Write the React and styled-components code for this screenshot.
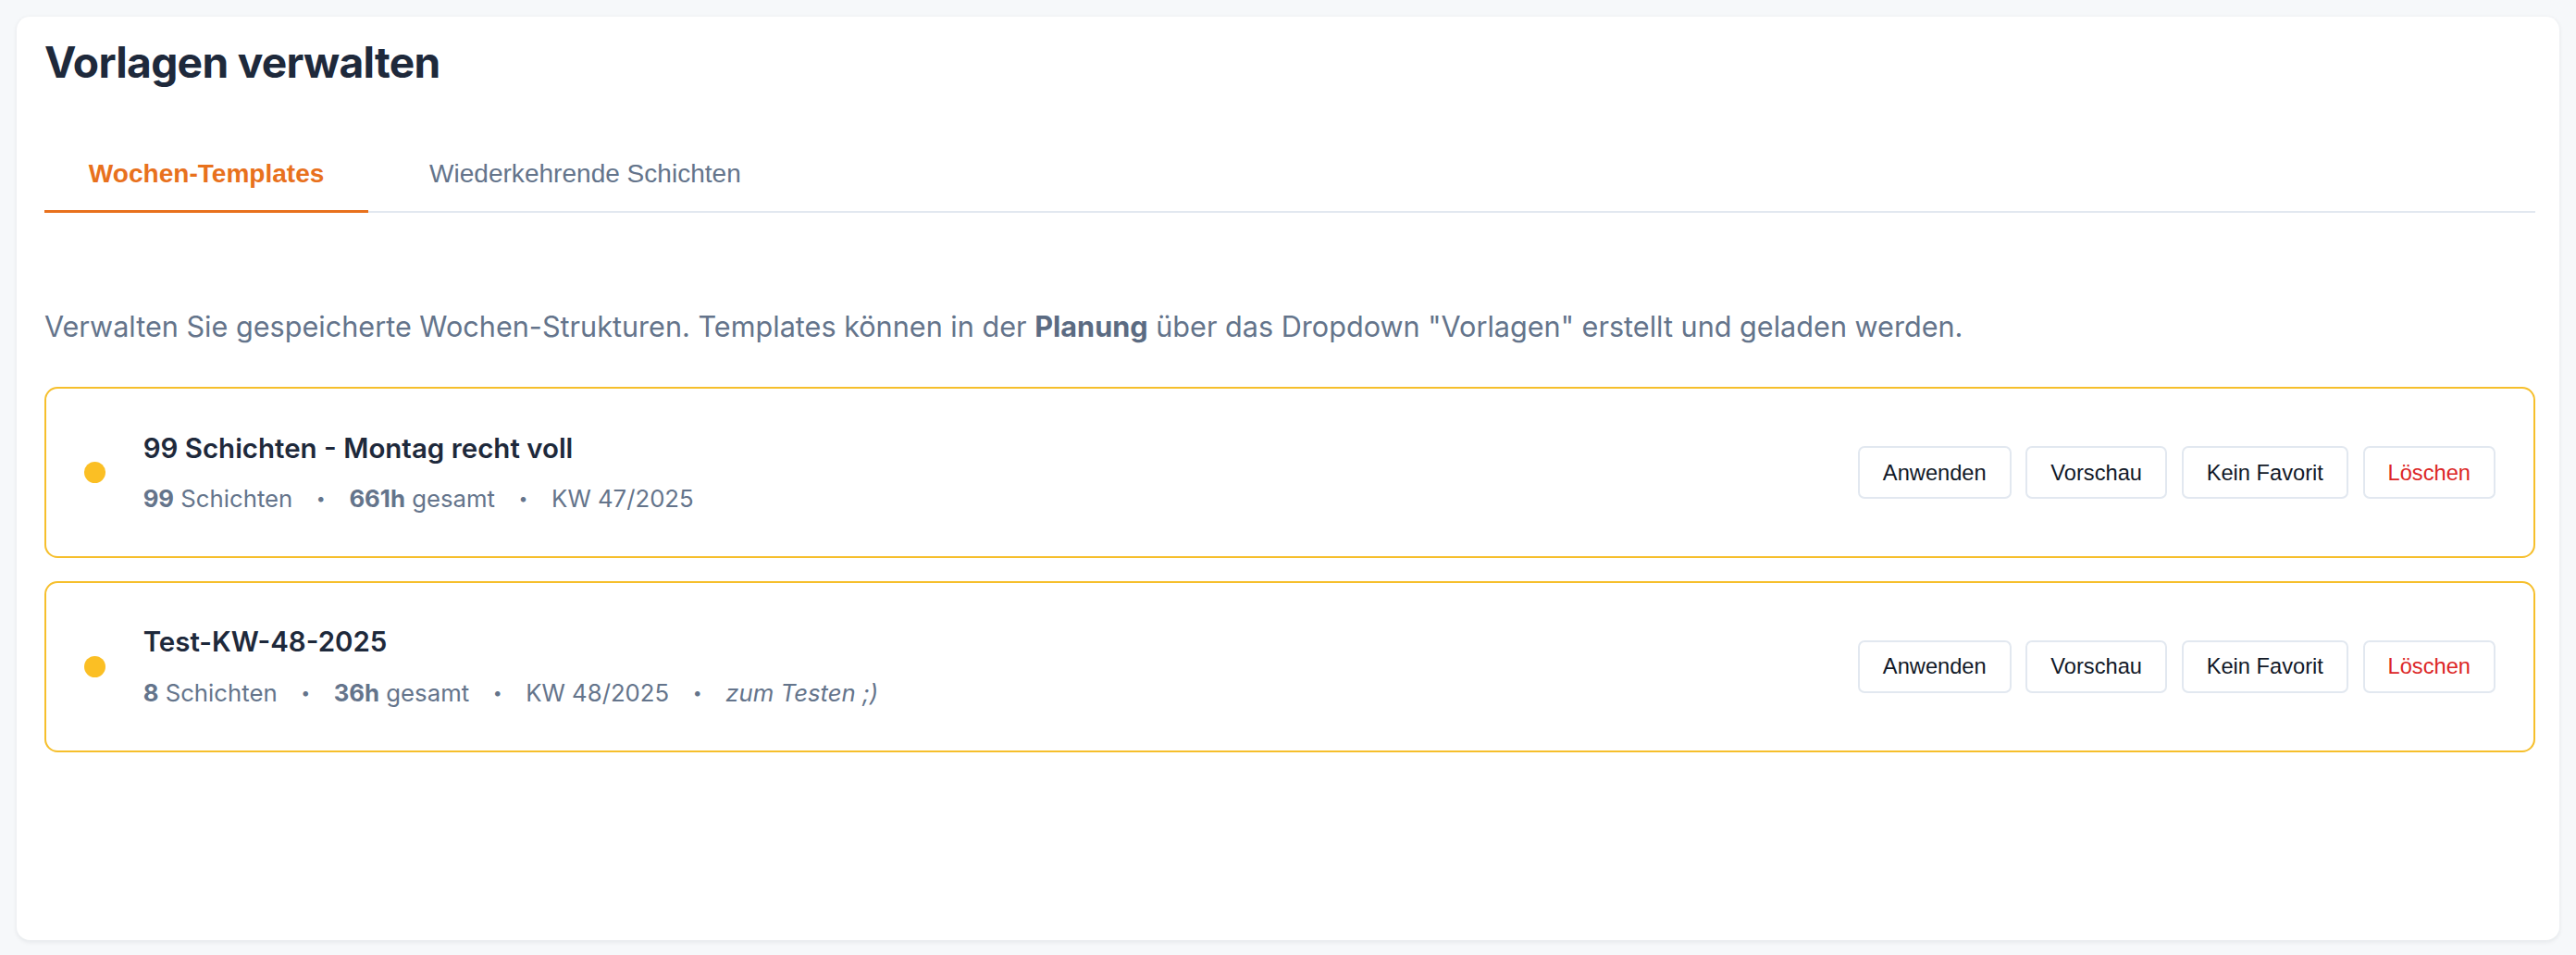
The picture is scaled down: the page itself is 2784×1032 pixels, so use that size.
import React, { useState } from 'react';
import styled, { createGlobalStyle } from 'styled-components';

const GlobalStyle = createGlobalStyle`
  html, body {
    margin: 0;
    padding: 0;
    background: #f6f8fa;
  }
  #root {
    zoom: 1.7755;
  }
`;

const Page = styled.div`
  box-sizing: border-box;
  height: 581px;
  padding: 10px 10px 9px 10px;
  font-family: Inter, "Noto Sans", sans-serif;
`;

const Card = styled.div`
  box-sizing: border-box;
  height: 100%;
  background: #ffffff;
  border-radius: 8px;
  box-shadow: 0 1px 3px rgba(15, 23, 42, 0.08);
  padding: 11px 15px 0 17px;
`;

const Title = styled.h1`
  margin: 0;
  font-size: 26px;
  line-height: 34px;
  font-weight: 700;
  letter-spacing: -0.4px;
  color: #1e293b;
`;

const TabBar = styled.div`
  display: flex;
  gap: 10px;
  margin-top: 32px;
  border-bottom: 1.15px solid #e2e8f0;
`;

const Tab = styled.button`
  font-family: "Liberation Sans", Arial, sans-serif;
  font-size: 15.8px;
  font-weight: ${p => (p.$active ? 700 : 400)};
  color: ${p => (p.$active ? '#e8711d' : '#64748b')};
  background: none;
  border: none;
  border-bottom: 2px solid ${p => (p.$active ? '#e8711d' : 'transparent')};
  margin-bottom: -1.15px;
  padding: 10px 27px 13px;
  cursor: pointer;
`;

const Intro = styled.p`
  margin: 56px 0 24px;
  font-size: 17.25px;
  line-height: 26px;
  color: #64748b;

  strong {
    font-weight: 700;
    color: #5b6b82;
  }
`;

const List = styled.div`
  display: flex;
  flex-direction: column;
  gap: 14px;
`;

const Item = styled.div`
  display: flex;
  align-items: center;
  height: 104px;
  box-sizing: border-box;
  border: 1.15px solid #f6bf2c;
  border-radius: 8px;
  padding: 0 23px;
`;

const Dot = styled.span`
  flex: none;
  width: 13px;
  height: 13px;
  border-radius: 50%;
  background: #fbbf24;
  margin-right: 23px;
`;

const Info = styled.div`
  flex: 1;
  display: flex;
  flex-direction: column;
  gap: 10px;
`;

const Name = styled.div`
  font-size: 16.6px;
  line-height: 22px;
  font-weight: 600;
  color: #1e293b;
`;

const Meta = styled.div`
  display: flex;
  align-items: center;
  gap: 14.4px;
  font-size: 14.5px;
  line-height: 20px;
  color: #64748b;

  b {
    font-weight: 700;
  }
`;

const Sep = styled.span`
  font-size: 10px;
`;

const Note = styled.span`
  font-style: italic;
`;

const Actions = styled.div`
  display: flex;
  gap: 9px;
`;

const ActionButton = styled.button`
  font-family: "Liberation Sans", Arial, sans-serif;
  font-size: 13.333px;
  line-height: 16px;
  padding: 7px 14px;
  background: #ffffff;
  border: 1.15px solid #e2e8f0;
  border-radius: 4px;
  color: ${p => (p.$danger ? '#dc2626' : '#111827')};
  cursor: pointer;
`;

const templates = [
  {
    name: '99 Schichten - Montag recht voll',
    shifts: 99,
    hours: '661h',
    week: 'KW 47/2025',
  },
  {
    name: 'Test-KW-48-2025',
    shifts: 8,
    hours: '36h',
    week: 'KW 48/2025',
    note: 'zum Testen ;)',
  },
];

const TemplateRow = ({ item }) => (
  <Item>
    <Dot />
    <Info>
      <Name>{item.name}</Name>
      <Meta>
        <span><b>{item.shifts}</b> Schichten</span>
        <Sep>•</Sep>
        <span><b>{item.hours}</b> gesamt</span>
        <Sep>•</Sep>
        <span>{item.week}</span>
        {item.note && (
          <>
            <Sep>•</Sep>
            <Note>{item.note}</Note>
          </>
        )}
      </Meta>
    </Info>
    <Actions>
      <ActionButton>Anwenden</ActionButton>
      <ActionButton>Vorschau</ActionButton>
      <ActionButton>Kein Favorit</ActionButton>
      <ActionButton $danger>Löschen</ActionButton>
    </Actions>
  </Item>
);

export default function App() {
  const [tab, setTab] = useState('weeks');

  return (
    <>
      <GlobalStyle />
      <Page>
        <Card>
          <Title>Vorlagen verwalten</Title>
          <TabBar>
            <Tab $active={tab === 'weeks'} onClick={() => setTab('weeks')}>
              Wochen-Templates
            </Tab>
            <Tab $active={tab === 'recurring'} onClick={() => setTab('recurring')}>
              Wiederkehrende Schichten
            </Tab>
          </TabBar>
          <Intro>
            Verwalten Sie gespeicherte Wochen-Strukturen. Templates können in der{' '}
            <strong>Planung</strong> über das Dropdown "Vorlagen" erstellt und geladen werden.
          </Intro>
          <List>
            {templates.map((t, i) => (
              <TemplateRow item={t} key={i} />
            ))}
          </List>
        </Card>
      </Page>
    </>
  );
}
